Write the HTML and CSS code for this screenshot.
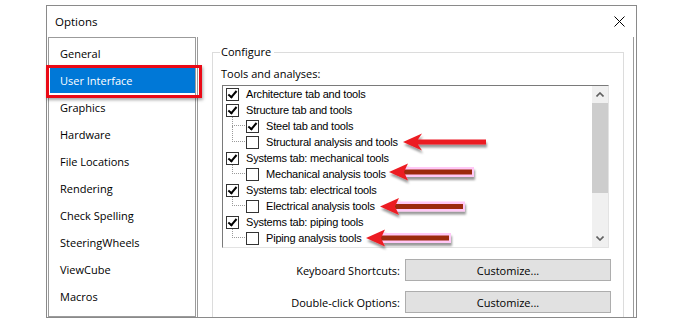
FILE: index.html
```html
<!DOCTYPE html>
<html lang="en">
<head>
  <meta charset="UTF-8">
  <title>Options</title>
  <link rel="stylesheet" href="styles.css">
</head>
<body>
  <div class="dialog">
    <div class="titlebar">
      <span class="title">Options</span>
      <svg class="close" width="11" height="11" viewBox="0 0 11 11">
        <path d="M0.5 0.5 L10.5 10.5 M10.5 0.5 L0.5 10.5" stroke="#000" stroke-width="1" fill="none"/>
      </svg>
    </div>
    <div class="body">
      <ul class="nav">
        <li>General</li>
        <li class="active">User Interface<span class="mark"></span></li>
        <li>Graphics</li>
        <li>Hardware</li>
        <li>File Locations</li>
        <li>Rendering</li>
        <li>Check Spelling</li>
        <li>SteeringWheels</li>
        <li>ViewCube</li>
        <li>Macros</li>
      </ul>
      <div class="pane">
        <fieldset class="group">
          <legend>Configure</legend>
          <div class="label">Tools and analyses:</div>
          <div class="tree">
            <ul class="rows">
              <li class="row"><span class="cb on"></span>Architecture tab and tools</li>
              <li class="row"><span class="cb on"></span>Structure tab and tools</li>
              <li class="row child"><span class="branch"></span><span class="cb on"></span>Steel tab and tools</li>
              <li class="row child"><span class="branch"></span><span class="cb"></span>Structural analysis and tools</li>
              <li class="row"><span class="cb on"></span>Systems tab: mechanical tools</li>
              <li class="row child"><span class="branch"></span><span class="cb"></span>Mechanical analysis tools</li>
              <li class="row"><span class="cb on"></span>Systems tab: electrical tools</li>
              <li class="row child"><span class="branch"></span><span class="cb"></span>Electrical analysis tools</li>
              <li class="row"><span class="cb on"></span>Systems tab: piping tools</li>
              <li class="row child"><span class="branch"></span><span class="cb"></span>Piping analysis tools</li>
            </ul>
            <div class="scrollbar">
              <div class="sb-btn">
                <svg width="8" height="5" viewBox="0 0 8 5"><path d="M0.5 4.5 L4 1 L7.5 4.5" stroke="#606060" stroke-width="1.6" fill="none"/></svg>
              </div>
              <div class="thumb"></div>
              <div class="track"></div>
              <div class="sb-btn">
                <svg width="8" height="5" viewBox="0 0 8 5"><path d="M0.5 0.5 L4 4 L7.5 0.5" stroke="#606060" stroke-width="1.6" fill="none"/></svg>
              </div>
            </div>
          </div>
          <div class="field">
            <span>Keyboard Shortcuts:</span>
            <button>Customize...</button>
          </div>
          <div class="field second">
            <span>Double-click Options:</span>
            <button>Customize...</button>
          </div>
        </fieldset>
      </div>
    </div>
  </div>

  <svg class="arrows" width="682" height="321" viewBox="0 0 682 321">
    <defs>
      <filter id="sh" x="-20%" y="-100%" width="140%" height="300%">
        <feDropShadow dx="1" dy="3" stdDeviation="1.2" flood-color="#000" flood-opacity="0.4"/>
      </filter>
    </defs>
    <g filter="url(#sh)">
      <path d="M403 142 L422 133.5 L418 139.5 L486 139.5 L486 144.5 L418 144.5 L422 150.5 Z" fill="#ec1c24"/>
    </g>
    <g filter="url(#sh)">
      <rect x="401" y="167" width="73" height="10" fill="#ffc8f6"/>
      <rect x="403" y="169.5" width="69" height="5" fill="#9c2a0c"/>
      <path d="M389 172 L408 163.5 L404 172 L408 180.5 Z" fill="#ec1c24"/>
    </g>
    <g filter="url(#sh)">
      <rect x="392" y="201.5" width="73" height="10" fill="#ffc8f6"/>
      <rect x="394" y="204" width="69" height="5" fill="#9c2a0c"/>
      <path d="M380 206.5 L399 198 L395 206.5 L399 215 Z" fill="#ec1c24"/>
    </g>
    <g filter="url(#sh)">
      <rect x="378" y="233" width="73" height="10" fill="#ffc8f6"/>
      <rect x="380" y="235.5" width="69" height="5" fill="#9c2a0c"/>
      <path d="M366 238 L385 229.5 L381 238 L385 246.5 Z" fill="#ec1c24"/>
    </g>
  </svg>
</body>
</html>
```

FILE: styles.css
```css
body {
  margin: 0;
  width: 682px;
  height: 321px;
  overflow: hidden;
  position: relative;
  background-color: #fff;
  color: #000;
  font-family: "Open Sans", "Noto Sans", sans-serif;
  font-size: 11px;
}
.dialog {
  margin: 5px 0 0 46px;
  width: 589px;
  height: 311px;
  border: 1px solid #8a8a8a;
  display: flex;
  flex-direction: column;
}
.titlebar {
  height: 31px;
  flex: none;
  display: flex;
  align-items: center;
  justify-content: space-between;
  padding: 0 11px 0 8px;
}
.title {
  font-size: 11.5px;
}
.body {
  flex: 1;
  min-height: 0;
  display: flex;
  gap: 1px;
  padding-left: 1px;
}
.nav {
  width: 146px;
  margin: 0;
  padding: 3px 0 0;
  list-style: none;
  border: 1px solid #9b9b9b;
  flex: none;
}
.nav li {
  height: 25px;
  line-height: 25px;
  margin: 0 0 2px 1px;
  padding-left: 10px;
  font-size: 11px;
}
.nav .active {
  background-color: #0078d7;
  color: #fff;
  position: relative;
}
.mark {
  position: absolute;
  left: -4px;
  top: -3px;
  right: -7px;
  bottom: -5px;
  border: 3px solid #ea0a16;
  box-shadow: 1px 2px 3px rgba(0, 0, 0, 0.35);
}
.pane {
  flex: 1;
  margin-right: 2px;
  border-left: 1px solid #9b9b9b;
  border-right: 1px solid #9b9b9b;
  overflow: hidden;
}
.group {
  margin: 7px 9px 0 14px;
  padding: 0 0 0 7px;
  height: 300px;
  border: 1px solid #dcdcdc;
}
.group legend {
  padding: 0 3px 0 1px;
  line-height: 16px;
}
.label {
  margin: 6px 0 0 1px;
  line-height: 16px;
}
.tree {
  margin: 3px 0 0 2px;
  width: 385px;
  height: 161px;
  display: flex;
  border: 1px solid;
  border-color: #7a7a7a #e3e3e3 #e3e3e3 #7a7a7a;
}
.rows {
  flex: 1;
  margin: 0;
  padding: 0 0 0 3px;
  list-style: none;
  font-family: "Liberation Sans", Arial, sans-serif;
  font-size: 11px;
  letter-spacing: -0.2px;
}
.row {
  height: 16px;
  display: flex;
  align-items: center;
  position: relative;
  white-space: nowrap;
}
.row.child {
  padding-left: 20px;
}
.branch {
  position: absolute;
  left: 6px;
  top: -8px;
  width: 12px;
  height: 15px;
  border-left: 1px dotted #9a9a9a;
  border-bottom: 1px dotted #9a9a9a;
}
.cb {
  width: 11px;
  height: 11px;
  margin-right: 7px;
  border: 1px solid #333;
  background-color: #fff;
  position: relative;
  z-index: 1;
  flex: none;
}
.cb.on::after {
  content: "";
  position: absolute;
  left: 3px;
  top: 0px;
  width: 3px;
  height: 7px;
  border: solid #000;
  border-width: 0 2px 2px 0;
  transform: rotate(40deg);
}
.scrollbar {
  width: 16px;
  flex: none;
  display: flex;
  flex-direction: column;
  background-color: #f0f0f0;
}
.sb-btn {
  height: 17px;
  display: flex;
  align-items: center;
  justify-content: center;
}
.thumb {
  height: 90px;
  background-color: #cdcdcd;
}
.track {
  flex: 1;
}
.field {
  width: 390px;
  margin: 11px 0 0 1px;
  display: flex;
  align-items: center;
  justify-content: flex-end;
  gap: 5px;
}
.field.second {
  margin-top: 10px;
}
.field button {
  width: 206px;
  height: 22px;
  padding: 0;
  background-color: #e1e1e1;
  border: 1px solid #adadad;
  font-family: inherit;
  font-size: 11px;
  color: #000;
}
.arrows {
  position: absolute;
  left: 0;
  top: 0;
  pointer-events: none;
}
```
